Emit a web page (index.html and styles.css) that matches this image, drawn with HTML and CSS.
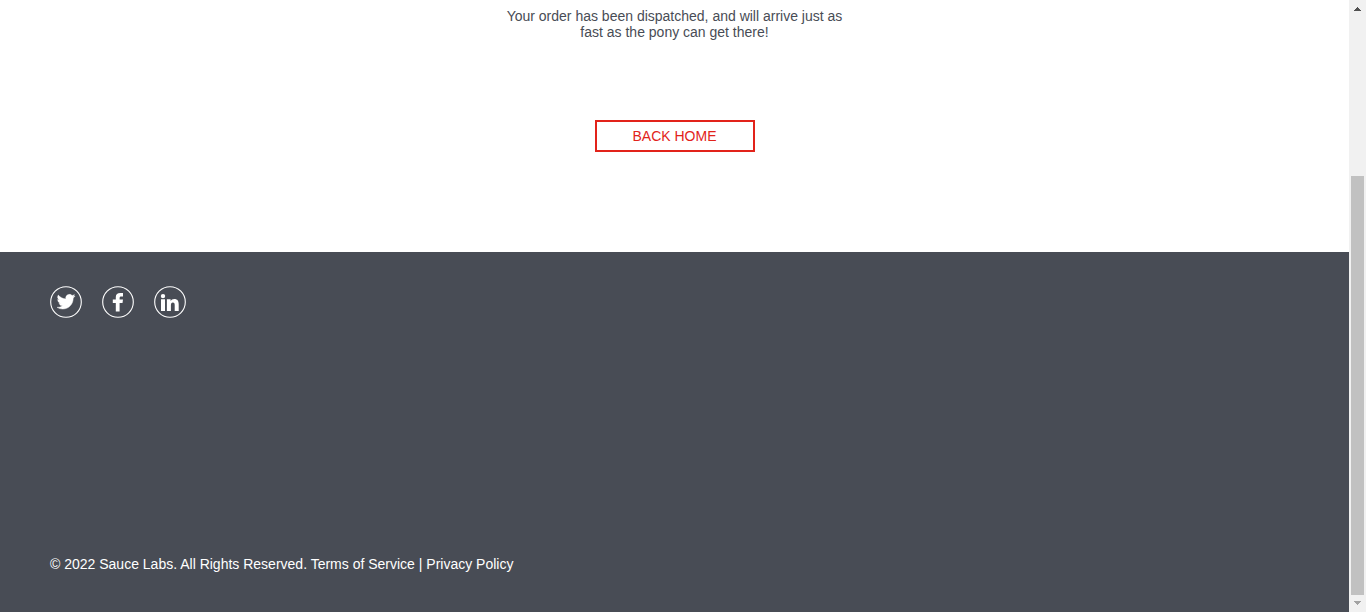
FILE: index.html
```html
<!DOCTYPE html>
<html lang="en">
<head>
<meta charset="utf-8">
<meta name="viewport" content="width=device-width, initial-scale=1">
<title>Swag Labs</title>
<link rel="stylesheet" href="styles.css">
</head>
<body>
<div class="page">
  <main class="complete">
    <p class="complete-text">Your order has been dispatched, and will arrive just as fast as the pony can get there!</p>
    <button class="back-button" type="button">BACK HOME</button>
  </main>
  <footer class="footer">
    <ul class="social">
      <li><a href="#twitter" aria-label="Twitter">
        <svg class="social-icon" viewBox="0 0 32 32" aria-hidden="true">
          <circle cx="16" cy="16" r="15.3" fill="none" stroke="#fff" stroke-width="1.1"/>
          <path transform="translate(7 6.700) scale(.75)" fill="#fff" stroke="#fff" stroke-width=".6" d="M23.950 4.570a10 10 0 0 1-2.820.77 4.960 4.960 0 0 0 2.160-2.720c-.95.55-2 .95-3.130 1.180a4.920 4.920 0 0 0-8.380 4.480C7.690 8.100 4.070 6.130 1.640 3.160a4.920 4.920 0 0 0 1.520 6.570 4.900 4.900 0 0 1-2.230-.61v.06a4.920 4.920 0 0 0 3.950 4.830 5 5 0 0 1-2.210.08 4.940 4.940 0 0 0 4.600 3.420A9.870 9.870 0 0 1 0 19.540a14 14 0 0 0 7.550 2.210c9.050 0 14-7.500 14-13.980 0-.21 0-.42-.02-.63a9.940 9.940 0 0 0 2.420-2.570z"/>
        </svg></a></li>
      <li><a href="#facebook" aria-label="Facebook">
        <svg class="social-icon" viewBox="0 0 32 32" aria-hidden="true">
          <circle cx="16" cy="16" r="15.3" fill="none" stroke="#fff" stroke-width="1.1"/>
          <path fill="#fff" d="M13.800 25.500V17h-3v-3.500h3v-2.400C13.800 8.300 15.500 7 18.200 7H21v3.400h-1.800c-1.200 0-1.600.6-1.600 1.500v1.600H21l-.5 3.500h-2.900v8.500z"/>
        </svg></a></li>
      <li><a href="#linkedin" aria-label="LinkedIn">
        <svg class="social-icon" viewBox="0 0 32 32" aria-hidden="true">
          <circle cx="16" cy="16" r="15.3" fill="none" stroke="#fff" stroke-width="1.1"/>
          <circle cx="9" cy="10.100" r="2.200" fill="#fff"/>
          <path fill="#fff" d="M7 13.300h4V25H7zM12.900 13.300h3.700V15c.7-1.300 2-2 3.600-2 3.500 0 4.500 2.200 4.500 5.500V25h-4v-5.700c0-1.600-.3-2.800-1.800-2.800s-2 1.200-2 2.800V25h-4z"/>
        </svg></a></li>
    </ul>
    <p class="footer-copy">© 2022 Sauce Labs. All Rights Reserved. Terms of Service | Privacy Policy</p>
  </footer>
</div>
<div class="scrollbar" aria-hidden="true">
  <svg class="scroll-arrow" viewBox="0 0 17 17"><path fill="#505050" d="M5 11h7v-1h-1V9h-1V8H9V7H8v1H7v1H6v1H5z"/></svg>
  <div class="scroll-track"><div class="scroll-thumb"></div></div>
  <svg class="scroll-arrow" viewBox="0 0 17 17"><path fill="#a3a3a3" d="M5 6h7v1h-1v1h-1v1H9v1H8V9H7V8H6V7H5z"/></svg>
</div>
</body>
</html>
```
FILE: styles.css
```css
* {
  box-sizing: border-box;
}

body {
  display: flex;
  min-height: 100vh;
  margin: 0;
  background: #fff;
  color: #484c55;
  font: 14px/16px "Liberation Sans", Arial, sans-serif;
}

.page {
  display: flex;
  flex: 1;
  flex-direction: column;
}

.complete {
  display: flex;
  flex: 1;
  flex-direction: column;
  align-items: center;
  gap: 80px;
  padding: 8px 16px 100px;
}

.complete-text {
  max-width: 360px;
  margin: 0;
  text-align: center;
}

.back-button {
  width: 160px;
  height: 32px;
  padding: 0;
  border: 2px solid #e2231a;
  background: #fff;
  color: #e2231a;
  font: inherit;
  cursor: pointer;
}

.footer {
  display: flex;
  flex-direction: column;
  justify-content: space-between;
  min-height: 360px;
  padding: 34px 50px 40px;
  background: #484c55;
  color: #fff;
}

.social {
  display: flex;
  gap: 20px;
  margin: 0;
  padding: 0;
  list-style: none;
}

.social-icon {
  display: block;
  width: 32px;
  height: 32px;
}

.footer-copy {
  margin: 0;
}

.scrollbar {
  display: flex;
  flex-direction: column;
  width: 17px;
  background: #f1f1f1;
}

.scroll-arrow {
  display: block;
  width: 17px;
  height: 17px;
}

.scroll-track {
  display: flex;
  flex: 1;
  flex-direction: column;
  justify-content: flex-end;
  padding: 0 2px;
}

.scroll-thumb {
  height: 72.5%;
  background: #c1c1c1;
}
```
